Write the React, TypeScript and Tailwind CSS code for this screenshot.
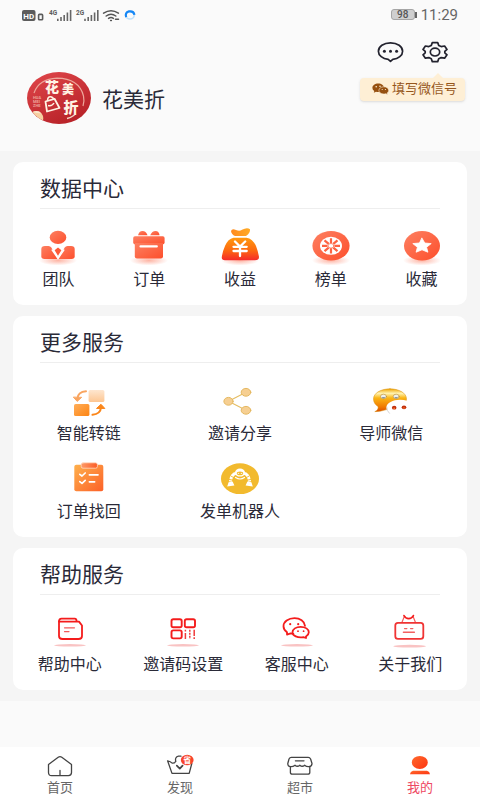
import React from "react";

type Item = { label: string; icon: React.ReactNode };

function Defs() {
  return (
    <svg width="0" height="0" className="absolute" aria-hidden="true">
      <defs>
        <linearGradient id="coral" x1="0" y1="0" x2="1" y2="1">
          <stop offset="0" stopColor="#fd8062" />
          <stop offset="1" stopColor="#fd4f2c" />
        </linearGradient>
        <linearGradient id="bag" x1="0" y1="0" x2="0" y2="1">
          <stop offset="0" stopColor="#ff9a10" />
          <stop offset="0.55" stopColor="#fd6a10" />
          <stop offset="1" stopColor="#f52a2a" />
        </linearGradient>
        <linearGradient id="knot" x1="0" y1="0" x2="1" y2="0">
          <stop offset="0" stopColor="#ff8a1c" />
          <stop offset="1" stopColor="#ffab26" />
        </linearGradient>
        <linearGradient id="paleOrange" x1="0" y1="0" x2="0" y2="1">
          <stop offset="0" stopColor="#fee6cf" />
          <stop offset="1" stopColor="#fdc692" />
        </linearGradient>
        <linearGradient id="deepOrange" x1="0" y1="0" x2="1" y2="1">
          <stop offset="0" stopColor="#ffae5a" />
          <stop offset="1" stopColor="#fd8412" />
        </linearGradient>
        <linearGradient id="board" x1="0" y1="0" x2="1" y2="1">
          <stop offset="0" stopColor="#feb04c" />
          <stop offset="1" stopColor="#fc6128" />
        </linearGradient>
        <linearGradient id="clip" x1="0" y1="0" x2="1" y2="0">
          <stop offset="0" stopColor="#fd9a68" />
          <stop offset="1" stopColor="#fb5c26" />
        </linearGradient>
        <linearGradient id="bubble" x1="0" y1="0" x2="0" y2="1">
          <stop offset="0" stopColor="#f0a400" />
          <stop offset="0.2" stopColor="#fff3b0" />
          <stop offset="0.4" stopColor="#fbb616" />
          <stop offset="0.8" stopColor="#f07800" />
          <stop offset="1" stopColor="#d94a00" />
        </linearGradient>
        <linearGradient id="me" x1="0" y1="0" x2="1" y2="1">
          <stop offset="0" stopColor="#ff6a2c" />
          <stop offset="1" stopColor="#fd3412" />
        </linearGradient>
        <linearGradient id="logo" x1="0" y1="0" x2="0.6" y2="1">
          <stop offset="0" stopColor="#e0474b" />
          <stop offset="1" stopColor="#b92329" />
        </linearGradient>
        <radialGradient id="glow">
          <stop offset="0" stopColor="#fd6a4a" stopOpacity="0.5" />
          <stop offset="1" stopColor="#fd6a4a" stopOpacity="0" />
        </radialGradient>
      </defs>
    </svg>
  );
}

function Glyph({ children }: { children: React.ReactNode }) {
  return (
    <svg viewBox="0 0 48 40" className="h-10 w-12" fill="none" strokeLinecap="round" strokeLinejoin="round" aria-hidden="true">
      {children}
    </svg>
  );
}

const Glow = () => <ellipse cx="24" cy="34.5" rx="19" ry="5" fill="url(#glow)" />;
const Base = () => <ellipse cx="24" cy="34.3" rx="16" ry="1.3" fill="#f9c3c3" />;

const dataItems: Item[] = [
  {
    label: "团队",
    icon: (
      <Glyph>
        <Glow />
        <ellipse cx="24" cy="11.4" rx="8.3" ry="6.6" fill="url(#coral)" />
        <path d="M11 20H14.5Q16.3 20 17.3 21.6L24 33H10.5Q7.3 33 7.3 30.3V23Q7.3 20 11 20Z" fill="url(#coral)" />
        <path d="M37 20H33.5Q31.7 20 30.7 21.6L24 33H37.5Q40.7 33 40.7 30.3V23Q40.7 20 37 20Z" fill="url(#coral)" />
        <path d="M18.2 24L24 32.5L29.8 24" stroke="#fff" strokeWidth="1.4" />
        <path d="M24 21.5L27.4 24.3L24 29.8L20.6 24.3Z" fill="#fd5a38" />
      </Glyph>
    ),
  },
  {
    label: "订单",
    icon: (
      <Glyph>
        <Glow />
        <path d="M13 9.3Q14 5 17.5 5Q21 5 22.6 9.3Z" fill="url(#coral)" />
        <path d="M25.2 9.3Q27 5 30.5 5Q34 5 34.6 9.3Z" fill="url(#coral)" />
        <rect x="8.2" y="10.2" width="31.4" height="8.2" rx="1.8" fill="url(#coral)" />
        <path d="M9.8 17H38V30.5Q38 32.5 35.8 32.5H12Q9.8 32.5 9.8 30.5Z" fill="url(#coral)" />
        <path d="M15.5 20.4H31.8" stroke="#fff" strokeWidth="2.2" />
      </Glyph>
    ),
  },
  {
    label: "收益",
    icon: (
      <Glyph>
        <Glow />
        <path d="M15 5Q16 2 20 4Q23.5 5.6 26 3.8Q31 1 34 3.2Q34.5 7 30 10H19Q15.5 8.5 15 5Z" fill="url(#knot)" />
        <path d="M17.5 11.7H30.5Q36.5 12.5 40 20Q42 25 43 31Q43 34.2 39 34.3H9Q5.4 34.2 5.8 31Q6.5 25.5 9 20Q12 12.8 17.5 11.7Z" fill="url(#bag)" />
        <path d="M19 15.5L24 20.5L29.2 15.5M17.5 20.8H30.7M17.5 25H30.7M24 20.8V30" stroke="#fff" strokeWidth="2.3" />
      </Glyph>
    ),
  },
  {
    label: "榜单",
    icon: (
      <Glyph>
        <Glow />
        <ellipse cx="24" cy="19.8" rx="18.6" ry="14.8" fill="url(#coral)" />
        <ellipse cx="24" cy="19.8" rx="11" ry="9" fill="#fff" />
        <g stroke="#fd6342" strokeWidth="2.2" strokeLinecap="butt">
          <path d="M24 12.2V17.4M24 22.2V27.4M15 19.8H20.5M27.5 19.8H33M17.5 14.4L21.7 17.9M26.3 21.7L30.5 25.2M30.5 14.4L26.3 17.9M21.7 21.7L17.5 25.2" />
        </g>
        <ellipse cx="24" cy="19.8" rx="2.9" ry="2.3" fill="#fff" stroke="#fd6342" strokeWidth="0.7" />
      </Glyph>
    ),
  },
  {
    label: "收藏",
    icon: (
      <Glyph>
        <Glow />
        <ellipse cx="24" cy="19.8" rx="18" ry="14.7" fill="url(#coral)" />
        <path d="M24 12.2L26.8 17L33.2 17.6L28.6 21.2L29.9 26.2L24 23.8L18.1 26.2L19.4 21.2L14.8 17.6L21.2 17Z" fill="#fff" stroke="#fff" strokeWidth="0.8" />
      </Glyph>
    ),
  },
];

const moreItems: Item[] = [
  {
    label: "智能转链",
    icon: (
      <Glyph>
        <rect x="23.6" y="8" width="15.8" height="12" rx="1.6" fill="url(#paleOrange)" />
        <rect x="9" y="22" width="15.4" height="12" rx="1.6" fill="url(#deepOrange)" />
        <path d="M21 9.2Q13 9.8 12.4 16.5" stroke="#f9a560" strokeWidth="2" />
        <path d="M8.6 15.4L12.2 19.4L16.4 15.6Z" fill="#f9a560" stroke="#f9a560" />
        <path d="M27.5 32.8Q35.5 32 36 25.5" stroke="#fb861a" strokeWidth="2" />
        <path d="M31.8 26.2L36 22.3L39.6 26.2Z" fill="#fb861a" stroke="#fb861a" />
      </Glyph>
    ),
  },
  {
    label: "邀请分享",
    icon: (
      <Glyph>
        <path d="M30 10.3L12.5 19.3L30 28.3" stroke="#e5bd62" strokeWidth="1.1" />
        <g fill="#f6cf92" stroke="#e5b860" strokeWidth="1">
          <ellipse cx="12.5" cy="19.3" rx="4.6" ry="3.9" />
          <ellipse cx="30" cy="10.3" rx="4.8" ry="3.9" />
          <ellipse cx="30" cy="28.3" rx="4.8" ry="3.9" />
        </g>
      </Glyph>
    ),
  },
  {
    label: "导师微信",
    icon: (
      <Glyph>
        <path d="M23 6.8C32 6.8 39.5 11 39.5 17C39.5 23 32 27 23 27C19.5 27 14 30 7.8 29.6C11 28 11.4 26.3 11 24.5C8 22.5 6.5 20 6.5 17C6.5 11 14 6.8 23 6.8Z" fill="url(#bubble)" stroke="#d89010" strokeWidth="0.5" />
        <ellipse cx="16.5" cy="14.5" rx="3" ry="2.3" fill="#eef0ea" stroke="#b98a30" strokeWidth="0.6" />
        <ellipse cx="29.2" cy="14.5" rx="3" ry="2.3" fill="#eef0ea" stroke="#b98a30" strokeWidth="0.6" />
        <path d="M14.5 15.3Q16.5 17.5 18.5 15.3ZM27.2 15.3Q29.2 17.5 31.2 15.3Z" fill="#6c7a88" />
        <path d="M33 17.8C26 17.8 19.4 21 19.4 25.5C19.4 28 21 30 23 31.5H45V22Q41 17.8 33 17.8Z" fill="#fff" />
        <path d="M19.7 25Q19.6 29 22.4 31.3" stroke="#c9c9c9" strokeWidth="0.8" />
        <ellipse cx="27.2" cy="25.7" rx="2.3" ry="1.9" fill="#c22f0c" />
        <ellipse cx="37" cy="25.3" rx="2.3" ry="1.9" fill="#c22f0c" />
        <circle cx="27.2" cy="26.4" r="0.8" fill="#ff7a2a" />
        <circle cx="37" cy="26" r="0.8" fill="#ff7a2a" />
      </Glyph>
    ),
  },
  {
    label: "订单找回",
    icon: (
      <Glyph>
        <rect x="9.3" y="4.8" width="29" height="26.4" rx="2" fill="url(#board)" />
        <rect x="16.2" y="2.8" width="16.2" height="5.4" rx="1.8" fill="url(#clip)" stroke="#ffdcc4" strokeWidth="0.8" />
        <path d="M14.8 14.3L17 16L20.2 13M14.8 21.6L17 23.3L20.2 20.3" stroke="#fff" strokeWidth="1.7" />
        <path d="M24.4 14.8H33M24.4 21.8H29.6" stroke="#fff" strokeWidth="1.7" />
      </Glyph>
    ),
  },
  {
    label: "发单机器人",
    icon: (
      <Glyph>
        <ellipse cx="24" cy="18.7" rx="19" ry="15.4" fill="#f2ba2e" />
        <path d="M20.5 13.2Q15.4 13.6 14.4 21.5M27.5 13.2Q32.6 13.6 33.6 21.5" stroke="#fff" strokeWidth="3" strokeLinecap="butt" />
        <path d="M15.2 16.2L18.4 18M32.8 16.2L29.6 18M13 19.4L17 20.2M35 19.4L31 20.2" stroke="#f2ba2e" strokeWidth="0.9" />
        <path d="M12.6 22.3L16.6 21.4L18.4 25.6L11.2 26.4ZM35.4 22.3L31.4 21.4L29.6 25.6L36.8 26.4Z" fill="#fff" />
        <ellipse cx="24" cy="12.6" rx="5" ry="4" fill="#fff" />
        <ellipse cx="24" cy="13.4" rx="3.2" ry="1.8" fill="#f2ba2e" />
        <path d="M22.2 13.4H22.8M25.2 13.4H25.8" stroke="#fff" strokeWidth="0.9" />
        <path d="M19.6 17.4Q24 20.6 28.4 17.4" stroke="#fff" strokeWidth="1.2" />
      </Glyph>
    ),
  },
];

const helpItems: Item[] = [
  {
    label: "帮助中心",
    icon: (
      <Glyph>
        <g stroke="#f41c1c" strokeWidth="1.8">
          <path d="M13 10.3V25Q13 28 16.5 28H32.5Q36 28 36 25V14.5L33 10.6H13" />
          <path d="M13 10.6Q13 7.6 15.5 7.6H28.8Q30.4 7.6 30.6 10" />
        </g>
        <path d="M18.5 16.8H28.5M18.5 20.6H23" stroke="#f25a5a" strokeWidth="1.2" />
        <Base />
      </Glyph>
    ),
  },
  {
    label: "邀请码设置",
    icon: (
      <Glyph>
        <g stroke="#f41c1c" strokeWidth="1.9">
          <rect x="12.5" y="8.2" width="10.2" height="8" rx="1.8" />
          <rect x="25.8" y="8.2" width="10.2" height="8" rx="1.8" />
          <rect x="12.5" y="19.4" width="10.2" height="8" rx="1.8" />
        </g>
        <g stroke="#f03a3a" strokeWidth="1.5" strokeLinecap="butt">
          <path d="M26.4 18.8V20.6M26.4 22V28" />
          <path d="M30.8 18.8V28" strokeDasharray="2 1" />
          <path d="M35.2 18.8V25M35.2 26.2V28" />
        </g>
        <Base />
      </Glyph>
    ),
  },
  {
    label: "客服中心",
    icon: (
      <Glyph>
        <g stroke="#f41c1c" strokeWidth="1.8">
          <path d="M32 14.8C31.5 10.3 27 7.2 21.5 7.2C15.3 7.2 10.5 10.8 10.5 15.2C10.5 17.8 12 19.8 14 21.3V23.6L17.6 22.4Q19 22.8 20.4 22.8" />
          <path d="M27.6 15.8C32.4 15.8 35.8 18.2 35.8 21.2C35.8 23 34.6 24.4 33 25.4V27L30.4 26.2C24.6 27.2 19.5 24.8 19.5 21.2C19.5 18.2 23 15.8 27.6 15.8Z" />
        </g>
        <g fill="#f41c1c">
          <circle cx="17.2" cy="13.2" r="1.1" />
          <circle cx="25.2" cy="13.2" r="1.1" />
          <circle cx="25" cy="20.2" r="0.9" />
          <circle cx="30.6" cy="20.2" r="0.9" />
        </g>
        <Base />
      </Glyph>
    ),
  },
  {
    label: "关于我们",
    icon: (
      <Glyph>
        <path d="M16 11.2L18.2 5.8M29.4 11.2L27.2 5.8" stroke="#f26060" strokeWidth="1.2" />
        <path d="M18 4.6Q19.6 7.6 22.7 7.6Q25.8 7.6 27.4 4.6" stroke="#f41c1c" strokeWidth="1.7" />
        <rect x="9.3" y="11.8" width="28" height="16" rx="2.6" stroke="#f03434" strokeWidth="1.8" />
        <path d="M18.6 17.6H20.8M24.6 17.6H26.8M17.4 21.2H28.4" stroke="#f26060" strokeWidth="1.4" />
        <ellipse cx="23.6" cy="35.2" rx="16.3" ry="1.4" fill="#f9c3c3" />
      </Glyph>
    ),
  },
];

function Card({ title, children }: { title: string; children: React.ReactNode }) {
  return (
    <section className="rounded-[10px] bg-white pb-[15px]">
      <h2 className="mx-[27px] border-b border-[#eeeeee] pt-3.5 pb-1.5 text-[21px] leading-[26px] font-normal">{title}</h2>
      {children}
    </section>
  );
}

function Tile({ item, gap }: { item: Item; gap: "sm" | "md" }) {
  return (
    <button type="button" className={`flex flex-col items-center ${gap === "sm" ? "gap-0.5" : "gap-1"}`}>
      {item.icon}
      <span className="text-[16px] leading-5 whitespace-nowrap">{item.label}</span>
    </button>
  );
}

function WeChatMark() {
  return (
    <svg viewBox="0 0 17 12" className="h-3 w-[17px]" aria-hidden="true">
      <path d="M6.2 0.6C9.4 0.6 12 2.5 12 4.9C12 7.3 9.4 9.1 6.2 9.1Q5 9.1 4 8.8L1.8 9.8L2.3 8Q0.4 6.8 0.4 4.9C0.4 2.5 3 0.6 6.2 0.6Z" fill="#96500f" />
      <path d="M11.8 3.8C14.5 3.8 16.7 5.4 16.7 7.4Q16.7 9 15.2 10L15.5 11.4L13.6 10.7Q12.8 11 11.8 11C9 11 6.9 9.4 6.9 7.4C6.9 5.4 9 3.8 11.8 3.8Z" fill="#96500f" stroke="#fdf0d6" strokeWidth="0.6" />
      <g fill="#fdf0d6">
        <circle cx="4.2" cy="3.7" r="0.8" />
        <circle cx="8" cy="3.3" r="0.8" />
        <circle cx="10.2" cy="6.5" r="0.6" />
        <circle cx="13.4" cy="6.5" r="0.6" />
      </g>
    </svg>
  );
}

function StatusBar() {
  return (
    <div className="flex h-[31px] items-center justify-between pr-[22px] pl-[21px] text-[#666666]">
      <svg viewBox="0 0 116 14" className="h-3.5 w-[116px]" fill="none" aria-hidden="true">
        <rect x="1" y="1" width="13.5" height="11" rx="2" fill="#5c5c5c" />
        <text x="7.8" y="9.6" textAnchor="middle" fontSize="8" fontWeight="700" fill="#fff">HD</text>
        <rect x="17.6" y="5.4" width="4" height="5.4" rx="0.8" stroke="#5c5c5c" strokeWidth="1.6" />
        <text x="28" y="5.6" fontSize="6.5" fontWeight="700" fill="#5c5c5c">4G</text>
        <text x="55" y="5.6" fontSize="6.5" fontWeight="700" fill="#5c5c5c">2G</text>
        <g stroke="#666" strokeWidth="1.6">
          <path d="M36.8 12V9.8M40 12V8M43.2 12V6M46.4 12V3.5M49.6 12V1" />
          <path d="M64 12V9.8M67.2 12V8M70.4 12V6M73.6 12V3.5M76.8 12V1" />
        </g>
        <g stroke="#555" strokeWidth="1.5" strokeLinecap="round">
          <path d="M82.6 4.2Q90 -0.8 97.4 4.2M85.2 7Q90 3.6 94.8 7M87.6 9.4Q90 7.8 92.4 9.4" />
          <path d="M94.5 10.2H97.5M89.6 11.6H90.4" />
        </g>
        <ellipse cx="109" cy="6.2" rx="4.2" ry="3.8" stroke="#bfe0fb" strokeWidth="1.6" />
        <path d="M105.2 8.2Q103.6 3.6 108 2.4Q112.8 1.8 113.4 5.8" stroke="#1687f5" strokeWidth="2.2" />
      </svg>
      <div className="flex items-center gap-1 pb-0.5">
        <div className="flex items-center">
          <span className="flex h-[11px] w-6 items-center justify-center rounded-[3px] border border-[#a5a5a5] bg-[#cfcfcf] text-[10px] leading-none font-medium text-[#555555]">98</span>
          <span className="h-1.5 w-0.5 bg-[#666666]" />
        </div>
        <span className="text-[15px] leading-5">11:29</span>
      </div>
    </div>
  );
}

function Avatar() {
  return (
    <svg viewBox="0 0 64 52" className="h-[52px] w-16" role="img" aria-label="花美折" fill="none">
      <ellipse cx="32" cy="26" rx="32" ry="26" fill="url(#logo)" />
      <path d="M7 21Q12 7 30 6.2Q52 6.5 56.5 24Q57.6 29 56 34" stroke="#eda69a" strokeWidth="1.2" />
      <path d="M40 46.5Q44 45.6 47.5 43" stroke="#f3d9c8" strokeWidth="1.4" />
      <g fill="#fff3e4" fontWeight="900" textAnchor="middle">
        <text x="25" y="19.5" fontSize="14">花</text>
        <text x="41" y="22" fontSize="12">美</text>
        <text x="44" y="40.5" fontSize="15">折</text>
      </g>
      <g fill="#eda69a" fontSize="4" fontWeight="700">
        <text x="6" y="26.6">HUA</text>
        <text x="6" y="31">MEI</text>
        <text x="6" y="35.4">ZHE</text>
      </g>
      <path d="M18.5 29.5L27.5 26.8L32.5 36L20 39.5Z" stroke="#fff3e4" strokeWidth="1.8" strokeLinejoin="round" />
      <path d="M20.5 29Q20.5 24.6 23.5 24.8Q26 25 27 27.8M21 33.5Q25 34.5 27 31" stroke="#fff3e4" strokeWidth="1.5" />
      <path d="M5.6 40Q11 37.5 14.5 41.5Q17 44.5 16 48.4Q9.5 45.6 5.6 40Z" fill="#f6cfa0" />
      <path d="M5.6 40Q11 37.5 14.5 41.5Q9.5 41 5.6 40Z" fill="#fbe6cb" />
    </svg>
  );
}

const tabs: (Item & { active?: boolean })[] = [
  {
    label: "首页",
    icon: <path d="M4.5 10.5L14.2 3.2Q16 2 17.8 3.2L27.5 10.5V18.6Q27.5 21.6 24.4 21.6H7.6Q4.5 21.6 4.5 18.6ZM16 16.5V21.4" />,
  },
  {
    label: "发现",
    icon: (
      <>
        <path d="M3.6 6.8L8 19.4H25.2L27.8 9.5M3.6 6.8Q6.5 7.2 8.2 9.2Q10.6 9.4 11.8 7.4Q10.6 3.2 14.5 2.2H17" />
        <path d="M12.8 11.6L15.8 14.6L18.6 11.6" strokeWidth="1.7" />
        <ellipse cx="23.2" cy="6" rx="6.4" ry="5.2" fill="#f8452c" stroke="none" />
        <text x="23.2" y="9" textAnchor="middle" fontSize="8" fontWeight="700" fill="#fff" stroke="none">省</text>
      </>
    ),
  },
  {
    label: "超市",
    icon: (
      <>
        <path d="M7.4 3.4H24.2Q25.8 3.4 26.6 5L28 9.5Q28 12.4 25 12.6Q22.5 12.8 20.6 11.2Q18.2 13.4 15.8 11.2Q13.4 13.4 11 11.2Q9 12.8 6.6 12.6Q3.6 12.4 3.8 9.5L5 5Q5.8 3.4 7.4 3.4Z" />
        <path d="M6.4 12.6V18.4Q6.4 20.2 8.4 20.2H23.8Q25.8 20.2 25.8 18.4V12.6M11.4 6.8H20" />
      </>
    ),
  },
  {
    label: "我的",
    active: true,
    icon: (
      <g fill="url(#me)" stroke="none">
        <ellipse cx="15.8" cy="8.4" rx="8" ry="6.5" />
        <path d="M9 16.8H23Q25.8 17.4 26 20.2H6Q6.2 17.4 9 16.8Z" />
      </g>
    ),
  },
];

export default function App() {
  return (
    <div className="flex min-h-screen flex-col bg-[#fafafa] font-[Roboto,'Noto_Sans_CJK_SC',sans-serif] text-[#2a2a38]">
      <Defs />
      <header className="pb-[27px]">
        <StatusBar />
        <div className="flex h-[41px] items-center justify-end gap-[18px] pr-8">
          <button type="button" aria-label="消息">
            <svg viewBox="0 0 27 22" className="h-[22px] w-[27px]" fill="none" stroke="#22222e" strokeWidth="1.7" strokeLinejoin="round" aria-hidden="true">
              <path d="M13.5 1.8C20.4 1.8 25.6 5.5 25.6 10.2C25.6 14.5 21.4 17.8 15.8 18.4L13.5 20.4L11.2 18.4C5.6 17.8 1.4 14.5 1.4 10.2C1.4 5.5 6.6 1.8 13.5 1.8Z" />
              <g fill="#22222e" stroke="none">
                <circle cx="7.4" cy="10.2" r="1.5" />
                <circle cx="13.5" cy="10.2" r="1.5" />
                <circle cx="19.6" cy="10.2" r="1.5" />
              </g>
            </svg>
          </button>
          <div className="relative flex">
            <button type="button" aria-label="设置">
              <svg viewBox="0 0 26 22" className="h-[22px] w-[26px]" fill="none" stroke="#22222e" strokeWidth="1.7" strokeLinejoin="round" aria-hidden="true">
                <path d="M10.3 1.6H15.7L16.7 4.4L19.2 5.6L22.6 5L25 8.4L22.8 10.4V11.8L25 13.8L22.6 17.2L19.2 16.6L16.7 17.8L15.7 20.6H10.3L9.3 17.8L6.8 16.6L3.4 17.2L1 13.8L3.2 11.8V10.4L1 8.4L3.4 5L6.8 5.6L9.3 4.4Z" />
                <ellipse cx="13" cy="11.1" rx="4.7" ry="3.9" />
              </svg>
            </button>
            <button type="button" className="absolute top-[37px] -right-[17px] flex h-[23px] w-[105px] items-center justify-center gap-[3px] rounded-[4px] bg-[#feefd5] pl-1 text-[13px] text-[#96571c] shadow-sm">
              <span className="absolute -top-[5px] right-[22px] border-x-[5px] border-b-[5px] border-x-transparent border-b-[#feefd5]" />
              <WeChatMark />
              <span className="leading-5 whitespace-nowrap">填写微信号</span>
            </button>
          </div>
        </div>
        <div className="flex items-center gap-[11px] pl-[27px]">
          <Avatar />
          <h1 className="pt-1 text-[21px] leading-[26px]">花美折</h1>
        </div>
      </header>

      <main className="flex flex-col gap-[11px] bg-[#f5f5f5] px-[13px] py-[11px]">
        <Card title="数据中心">
          <div className="grid grid-cols-5 pt-[17px]">
            {dataItems.map((i) => <Tile key={i.label} item={i} gap="md" />)}
          </div>
        </Card>
        <Card title="更多服务">
          <div className="grid grid-cols-3 gap-y-4 pt-[19px]">
            {moreItems.map((i) => <Tile key={i.label} item={i} gap="sm" />)}
          </div>
        </Card>
        <Card title="帮助服务">
          <div className="grid grid-cols-4 pt-4">
            {helpItems.map((i) => <Tile key={i.label} item={i} gap="md" />)}
          </div>
        </Card>
      </main>

      <nav className="mt-auto grid grid-cols-4 bg-white pt-[7px] pb-1">
        {tabs.map((t) => (
          <a key={t.label} href="#" className={`flex flex-col items-center gap-0.5 ${t.active ? "text-[#ee4862]" : "text-[#666666]"}`}>
            <svg viewBox="0 0 32 24" className="h-6 w-8" fill="none" stroke="#444444" strokeWidth="1.3" strokeLinecap="round" strokeLinejoin="round" aria-hidden="true">
              {t.icon}
            </svg>
            <span className="text-[13px] leading-4">{t.label}</span>
          </a>
        ))}
      </nav>
    </div>
  );
}
